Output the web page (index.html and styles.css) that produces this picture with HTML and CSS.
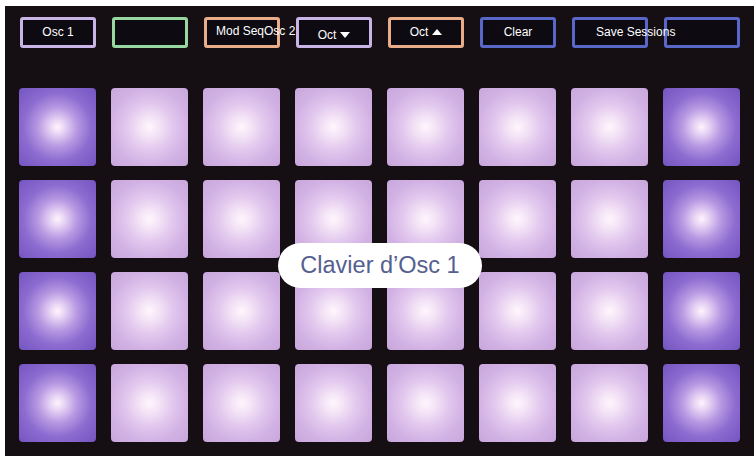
FILE: index.html
```html
<!DOCTYPE html>
<html>
<head>
<meta charset="utf-8">
<link rel="stylesheet" href="styles.css">
</head>
<body>
<div class="panel">
  <div class="toolbar">
    <div class="btn lav">Osc 1</div>
    <div class="btn green"></div>
    <div class="btn orange left mod">Mod SeqOsc 2</div>
    <div class="btn lav low">Oct <svg class="arrow" width="10" height="6" viewBox="0 0 10 6"><path d="M0 0H10L5 6Z" fill="#fff"/></svg></div>
    <div class="btn orange">Oct <svg class="arrow" width="10" height="6" viewBox="0 0 10 6"><path d="M0 6H10L5 0Z" fill="#fff"/></svg></div>
    <div class="btn blue">Clear</div>
    <div class="btn blue left save">Save Sessions</div>
    <div class="btn blue"></div>
  </div>
  <div class="grid">
    <div class="pad dark"></div><div class="pad"></div><div class="pad"></div><div class="pad"></div><div class="pad"></div><div class="pad"></div><div class="pad"></div><div class="pad dark"></div>
    <div class="pad dark"></div><div class="pad"></div><div class="pad"></div><div class="pad"></div><div class="pad"></div><div class="pad"></div><div class="pad"></div><div class="pad dark"></div>
    <div class="pad dark"></div><div class="pad"></div><div class="pad"></div><div class="pad"></div><div class="pad"></div><div class="pad"></div><div class="pad"></div><div class="pad dark"></div>
    <div class="pad dark"></div><div class="pad"></div><div class="pad"></div><div class="pad"></div><div class="pad"></div><div class="pad"></div><div class="pad"></div><div class="pad dark"></div>
  </div>
  <div class="tooltip">Clavier d’Osc 1</div>
</div>
</body>
</html>
```

FILE: styles.css
```css
html, body {
  margin: 0;
  padding: 0;
  background: #ffffff;
}
body {
  width: 754px;
  height: 459px;
  overflow: hidden;
  font-family: "Liberation Sans", Arial, sans-serif;
}
.panel {
  position: relative;
  margin: 6px 0 0 5px;
  width: 749px;
  height: 450px;
  background: #150e12;
  box-sizing: border-box;
  padding: 11px 0 0 15px;
}
.toolbar {
  display: flex;
  gap: 16px;
}
.btn {
  box-sizing: border-box;
  width: 76px;
  height: 31px;
  border: 3px solid #c8b4e6;
  border-radius: 3px;
  background: #0d0a12;
  color: #ffffff;
  font-size: 12px;
  display: flex;
  align-items: center;
  justify-content: center;
  gap: 4px;
  white-space: nowrap;
  padding-bottom: 2px;
}
.btn.green { border-color: #98d8a0; }
.btn.orange { border-color: #e9ad8a; }
.btn.blue { border-color: #5867c8; }
.btn.left { justify-content: flex-start; }
.btn.mod { padding-left: 9px; padding-bottom: 4px; position: relative; z-index: 1; }
.btn.save { padding-left: 21px; position: relative; z-index: 1; }
.btn.low { padding-top: 4px; padding-bottom: 0; }
.arrow { display: block; }
.grid {
  margin-top: 40px;
  margin-left: -1px;
  display: grid;
  grid-template-columns: repeat(8, 77px);
  grid-auto-rows: 78px;
  column-gap: 15px;
  row-gap: 14px;
}
.pad {
  border-radius: 4px;
  background: radial-gradient(circle at 50% 50%, #fff6fd 0%, #f4e4f6 18%, #e2c8ee 42%, #d2b2e4 70%, #c8a6dc 100%);
}
.pad.dark {
  background: radial-gradient(circle at 50% 50%, #fff4fc 0%, #e6d2f4 14%, #b698e2 36%, #8c6cd0 62%, #7454c0 100%);
}
.tooltip {
  position: absolute;
  left: 273px;
  top: 237px;
  width: 204px;
  height: 45px;
  border-radius: 23px;
  background: #ffffff;
  color: #55608f;
  font-size: 23.5px;
  display: flex;
  align-items: center;
  justify-content: center;
}
```
